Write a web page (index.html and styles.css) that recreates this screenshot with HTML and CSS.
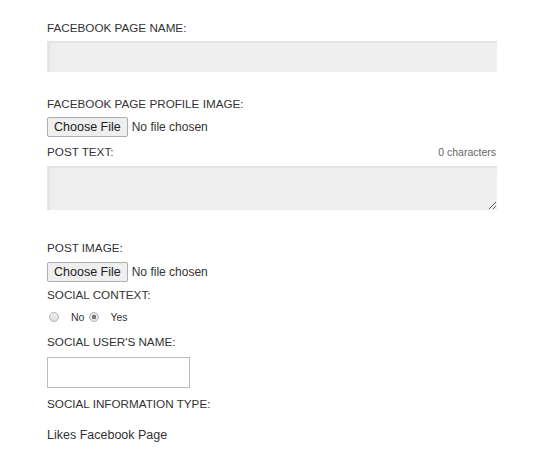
FILE: index.html
```html
<!DOCTYPE html>
<html lang="en">
<head>
    <meta charset="UTF-8">
    <meta name="viewport" content="width=device-width, initial-scale=1.0">
    <title>Facebook Post</title>
    <link rel="stylesheet" href="styles.css">
</head>
<body>
    <form class="post-form">
        <div class="field">
            <label for="pageName">FACEBOOK PAGE NAME:</label>
            <input type="text" id="pageName" class="text-grey">
        </div>
        <div class="field field-file">
            <label for="profileImage">FACEBOOK PAGE PROFILE IMAGE:</label>
            <input type="file" id="profileImage">
        </div>
        <div class="field field-post">
            <div class="label-row">
                <label for="postText">POST TEXT:</label>
                <span class="counter">0 characters</span>
            </div>
            <textarea id="postText" class="text-grey"></textarea>
        </div>
        <div class="field field-file">
            <label for="postImage">POST IMAGE:</label>
            <input type="file" id="postImage">
        </div>
        <div class="field field-radio">
            <label>SOCIAL CONTEXT:</label>
            <div class="radios">
                <input type="radio" name="context" id="ctxNo">
                <label for="ctxNo" class="radio-label">No</label>
                <input type="radio" name="context" id="ctxYes" checked>
                <label for="ctxYes" class="radio-label">Yes</label>
            </div>
        </div>
        <div class="field field-user">
            <label for="userName">SOCIAL USER'S NAME:</label>
            <input type="text" id="userName" class="text-white">
        </div>
        <div class="field field-info">
            <label>SOCIAL INFORMATION TYPE:</label>
            <p class="info-type">Likes Facebook Page</p>
        </div>
    </form>
</body>
</html>
```

FILE: styles.css
```css
body {
    font-family: "Liberation Sans", Arial, sans-serif;
    background-color: #fff;
    color: #333;
    margin: 0;
    padding: 0;
}
.post-form {
    width: 450px;
    padding: 21px 0 0 47px;
}
.field {
    display: flex;
    flex-direction: column;
    align-items: flex-start;
}
.field label {
    font-size: 11.7px;
    line-height: 14px;
    margin-bottom: 6px;
}
.text-grey {
    box-sizing: border-box;
    width: 450px;
    background-color: #efefef;
    border: none;
    border-top: 1px solid #e2e2e2;
    border-left: 1px solid #e6e6e6;
    box-shadow: inset 2px 1px 2px rgba(0, 0, 0, 0.05);
    margin: 0;
    padding: 4px 6px;
    font-family: inherit;
}
input.text-grey {
    height: 31px;
}
textarea.text-grey {
    height: 44px;
    resize: vertical;
}
.field-file {
    margin-top: 25px;
}
input[type="file"] {
    font-family: inherit;
    font-size: 12px;
    color: #333;
    margin: 0;
}
input[type="file"]::file-selector-button {
    font-family: inherit;
    font-size: 12.5px;
    height: 20px;
    padding: 0 6px;
    margin-right: 4px;
    color: #222;
    background-color: #efefef;
    border: 1px solid #adadad;
    border-radius: 2px;
}
.field-post {
    margin-top: 8px;
    align-items: stretch;
}
.field-post .label-row label {
    margin-bottom: 7px;
}
.label-row {
    display: flex;
    justify-content: space-between;
    align-items: baseline;
}
.counter {
    font-size: 10.5px;
    color: #666;
    margin-right: 1px;
}
.field-post + .field-file {
    margin-top: 31px;
}
.field-post + .field-file label {
    margin-bottom: 7px;
}
.field-radio {
    margin-top: 6px;
}
.field-radio > label {
    margin-bottom: 7px;
}
.radios {
    display: flex;
    align-items: center;
    height: 16px;
}
.radios input[type="radio"] {
    appearance: none;
    box-sizing: border-box;
    width: 10px;
    height: 10px;
    margin: 0 0 0 2px;
    border: 1px solid #b5b5b5;
    border-radius: 50%;
    background: linear-gradient(#f3f3f3, #dcdcdc);
}
.radios input[type="radio"]:checked {
    background: radial-gradient(circle, #7a7a7a 0 2px, #e4e4e4 2.5px);
}
.radios .radio-label {
    font-size: 10.5px;
    margin: 0 3px 0 12px;
    line-height: 14px;
}
.radios .radio-label:last-child {
    margin-left: 11px;
}
.field-user {
    margin-top: 10px;
}
.field-user label {
    margin-bottom: 8px;
}
.text-white {
    box-sizing: border-box;
    width: 143px;
    height: 31px;
    border: 1px solid #bbb;
    background-color: #fff;
    margin: 0;
    padding: 4px;
}
.field-info {
    margin-top: 9px;
}
.info-type {
    font-size: 12.5px;
    margin: 11px 0 0;
}
```
